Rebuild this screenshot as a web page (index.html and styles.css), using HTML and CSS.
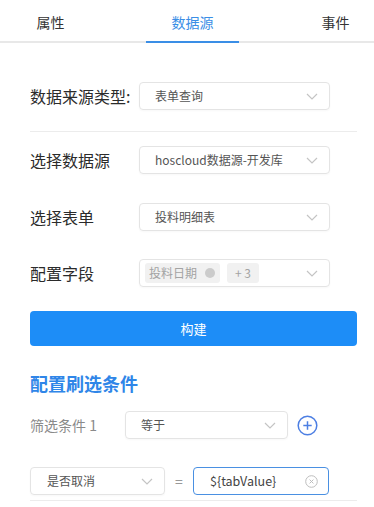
FILE: index.html
```html
<!DOCTYPE html>
<html lang="zh">
<head>
<meta charset="utf-8">
<link rel="stylesheet" href="styles.css">
</head>
<body>
<div class="tabs">
  <div class="tab tab-first">属性</div>
  <div class="tab tab-active">数据源</div>
  <div class="tab tab-last">事件</div>
</div>
<div class="content">
  <div class="row row-1">
    <div class="label">数据来源类型:</div>
    <div class="select"><span class="val">表单查询</span><svg class="chev" width="12" height="7" viewBox="0 0 12 7"><polyline points="1,1 6,6 11,1" fill="none" stroke="#c4c4c4" stroke-width="1.2"/></svg></div>
  </div>
  <div class="divider"></div>
  <div class="row row-2">
    <div class="label">选择数据源</div>
    <div class="select"><span class="val">hoscloud数据源-开发库</span><svg class="chev" width="12" height="7" viewBox="0 0 12 7"><polyline points="1,1 6,6 11,1" fill="none" stroke="#c4c4c4" stroke-width="1.2"/></svg></div>
  </div>
  <div class="row row-3">
    <div class="label">选择表单</div>
    <div class="select"><span class="val">投料明细表</span><svg class="chev" width="12" height="7" viewBox="0 0 12 7"><polyline points="1,1 6,6 11,1" fill="none" stroke="#c4c4c4" stroke-width="1.2"/></svg></div>
  </div>
  <div class="row row-4">
    <div class="label">配置字段</div>
    <div class="select select-tags">
      <span class="tag">投料日期<svg class="tag-x" width="10" height="10" viewBox="0 0 10 10"><circle cx="5" cy="5" r="5" fill="#cbcbcb"/></svg></span>
      <span class="tag tag-more">+ 3</span>
      <svg class="chev" width="12" height="7" viewBox="0 0 12 7"><polyline points="1,1 6,6 11,1" fill="none" stroke="#c4c4c4" stroke-width="1.2"/></svg>
    </div>
  </div>
  <button class="build">构建</button>
  <h2 class="heading">配置刷选条件</h2>
  <div class="filter-row">
    <div class="filter-label">筛选条件 1</div>
    <div class="select select-op"><span class="val">等于</span><svg class="chev" width="12" height="7" viewBox="0 0 12 7"><polyline points="1,1 6,6 11,1" fill="none" stroke="#c4c4c4" stroke-width="1.2"/></svg></div>
    <svg class="plus" width="21" height="21" viewBox="0 0 21 21"><circle cx="10.5" cy="10.5" r="9.3" fill="none" stroke="#4d7fe3" stroke-width="1.5"/><path d="M10.5 6.3 V14.7 M6.3 10.5 H14.7" stroke="#4d7fe3" stroke-width="1.5"/></svg>
  </div>
  <div class="cond-row">
    <div class="select select-field"><span class="val">是否取消</span><svg class="chev" width="12" height="7" viewBox="0 0 12 7"><polyline points="1,1 6,6 11,1" fill="none" stroke="#c4c4c4" stroke-width="1.2"/></svg></div>
    <span class="eq">=</span>
    <div class="input"><span class="val val-input">${tabValue}</span><svg class="clear" width="13" height="13" viewBox="0 0 13 13"><circle cx="6.5" cy="6.5" r="5.8" fill="none" stroke="#bdbdbd" stroke-width="1"/><path d="M4.6 4.6 L8.4 8.4 M8.4 4.6 L4.6 8.4" stroke="#bdbdbd" stroke-width="1"/></svg></div>
  </div>
  <div class="bottom-line"></div>
</div>
</body>
</html>
```
FILE: styles.css
```css
* { box-sizing: border-box; }
html, body { margin: 0; padding: 0; background: #fff; }
body {
  font-family: "Noto Sans CJK SC", "Noto Sans", sans-serif;
  color: #333;
  width: 374px;
  height: 507px;
  overflow: hidden;
}
.tabs {
  display: flex;
  height: 43px;
  border-bottom: 2px solid #e8e8e8;
  font-size: 14px;
  line-height: 20px;
}
.tab {
  display: flex;
  align-items: center;
  justify-content: center;
  padding-top: 3px;
  color: #333;
}
.tab-first { width: 101px; margin-right: 45px; }
.tab-active {
  width: 93px;
  color: #3a8ee6;
  border-bottom: 2px solid #3a8ee6;
  margin-bottom: -2px;
}
.tab-last { flex: 1; padding-left: 58px; }
.content {
  padding: 0 17px 0 30px;
}
.row {
  display: flex;
  align-items: center;
  height: 28px;
}
.row-1 { margin-top: 39px; }
.row-2 { margin-top: 14px; }
.row-3 { margin-top: 29px; }
.row-4 { margin-top: 28px; }
.label {
  width: 109px;
  flex: none;
  font-size: 16px;
  line-height: 22px;
  color: #2b2b2b;
}
.select {
  width: 191px;
  height: 28px;
  border: 1px solid #e4e4e4;
  border-radius: 4px;
  display: flex;
  align-items: center;
  padding: 0 11px 0 15px;
  box-shadow: 0 1px 2px rgba(0,0,0,0.03);
}
.val {
  flex: 1;
  font-size: 12px;
  line-height: 16px;
  color: #555;
  white-space: nowrap;
}
.chev { flex: none; margin-top: 1px; }
.divider {
  height: 1px;
  background: #ececec;
  margin-top: 21px;
}
.select-tags { padding-left: 5px; gap: 7px; }
.tag {
  display: inline-flex;
  align-items: center;
  gap: 8px;
  height: 20px;
  padding: 0 5px 0 4px;
  background: #f1f1f1;
  border-radius: 3px;
  font-size: 12px;
  line-height: 16px;
  color: #a3a3a3;
}
.tag-more { padding: 0 8px; margin-right: auto; }
.build {
  display: block;
  width: 100%;
  height: 35px;
  margin-top: 24px;
  border: none;
  border-radius: 4px;
  background: #1d8df7;
  color: #fff;
  font-family: "Noto Sans CJK SC", sans-serif;
  font-size: 13px;
  line-height: 18px;
  padding: 0;
}
.heading {
  margin: 25px 0 0 0;
  font-size: 18px;
  line-height: 24px;
  font-weight: 700;
  color: #2f86e8;
}
.filter-row {
  display: flex;
  align-items: center;
  margin-top: 16px;
  height: 28px;
}
.filter-label {
  width: 95px;
  font-size: 14px;
  line-height: 18px;
  color: #8a8a8a;
}
.select-op { width: 163px; }
.plus { margin-left: 9px; }
.cond-row {
  display: flex;
  align-items: center;
  height: 28px;
  margin-top: 28px;
}
.select-field { width: 135px; padding-left: 16px; }
.eq {
  width: 28px;
  text-align: center;
  color: #999;
  font-size: 14px;
  line-height: 18px;
}
.input {
  width: 136px;
  height: 28px;
  border: 1.5px solid #4a90e2;
  border-radius: 4px;
  display: flex;
  align-items: center;
  padding: 0 10px 0 16px;
}
.val-input { color: #444; font-size: 12.5px; }
.bottom-line {
  height: 1px;
  background: #ececec;
  margin-top: 5px;
}
```
